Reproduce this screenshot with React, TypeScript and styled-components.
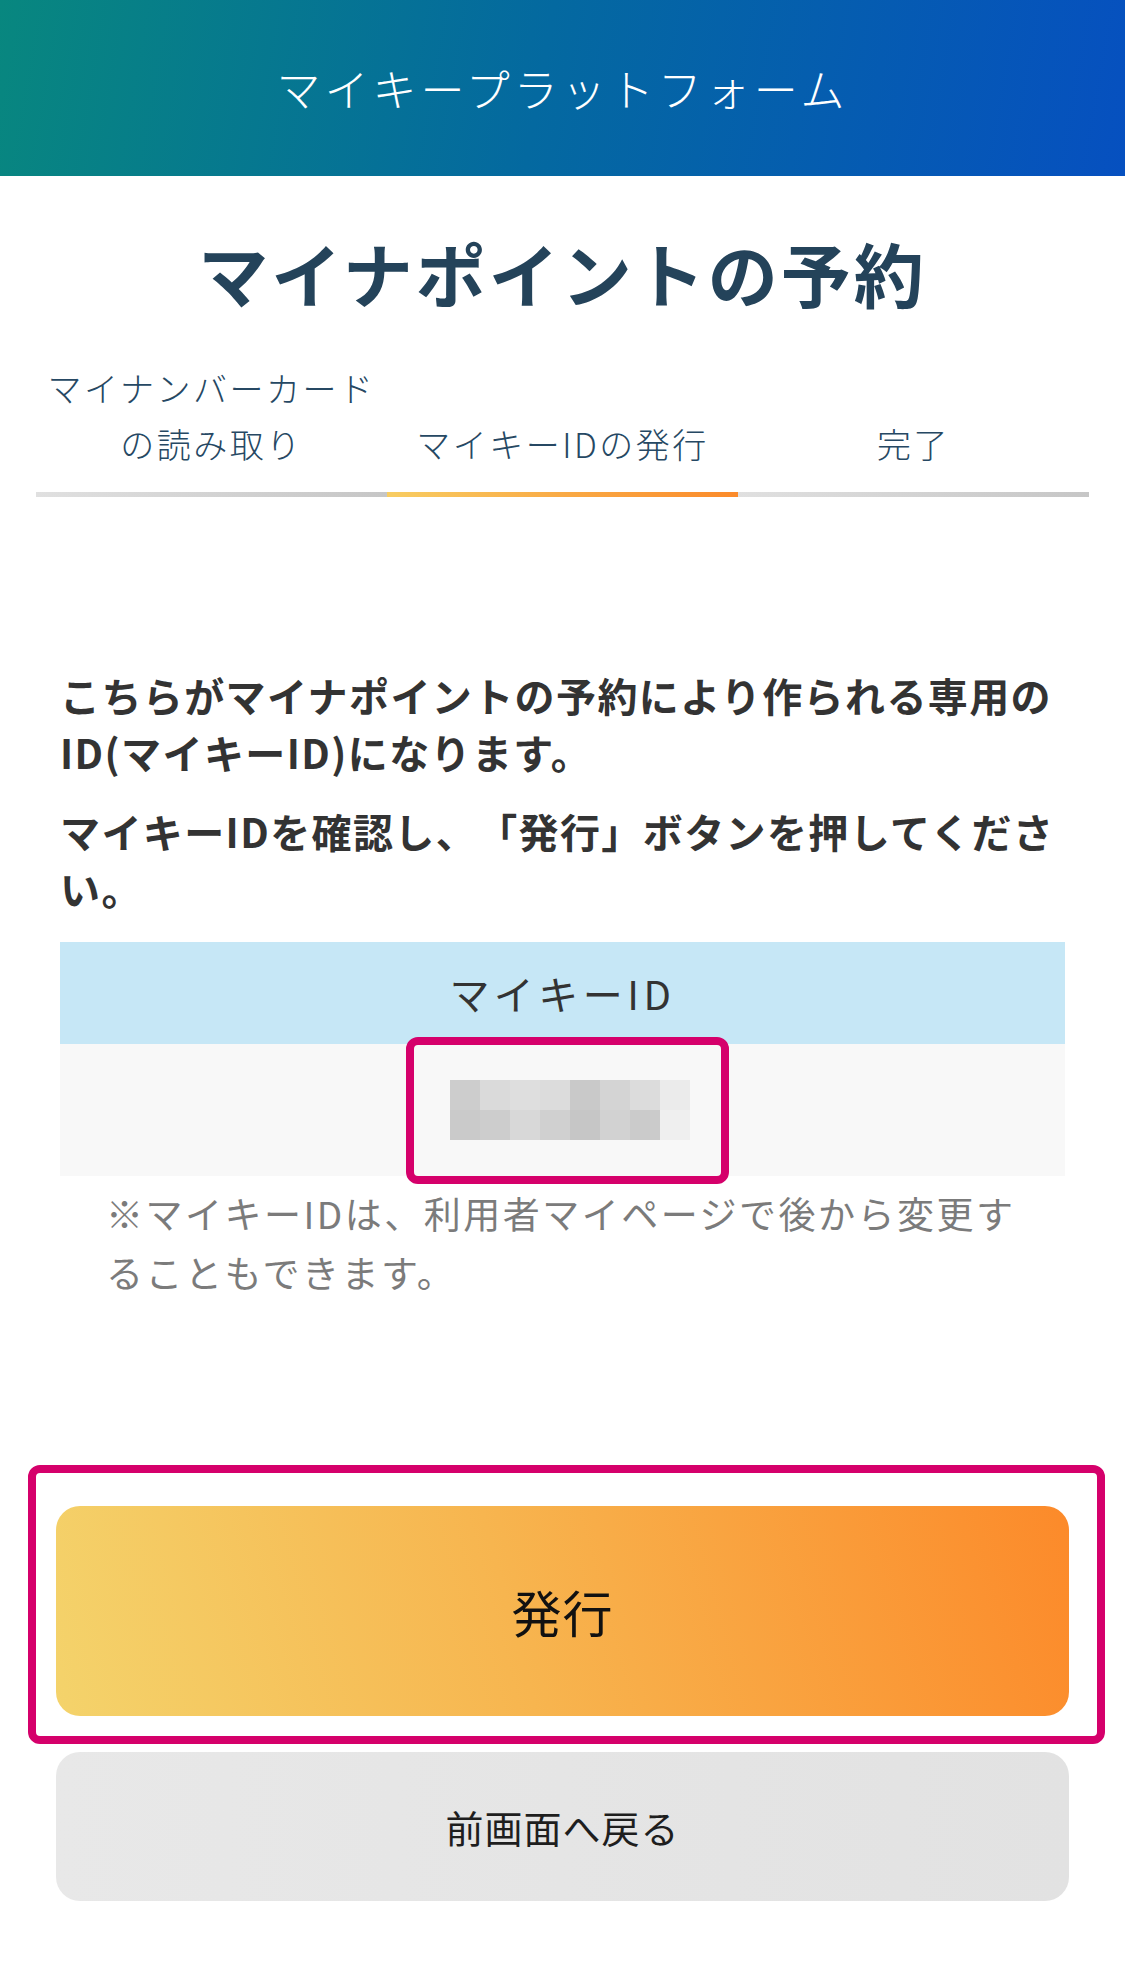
import React from "react";
import styled, { createGlobalStyle } from "styled-components";

const GlobalStyle = createGlobalStyle`
  html, body {
    margin: 0;
    padding: 0;
    background: #ffffff;
  }
  body {
    font-family: "Noto Sans CJK JP", "Noto Sans", "Liberation Sans", sans-serif;
    color: #333333;
    -webkit-font-smoothing: antialiased;
    text-spacing-trim: space-all;
  }
  * {
    box-sizing: border-box;
  }
`;

const Page = styled.div`
  width: 1125px;
  min-height: 1962px;
  display: flex;
  flex-direction: column;
  background: #ffffff;
`;

const Header = styled.header`
  height: 176px;
  display: flex;
  align-items: center;
  justify-content: center;
  background: linear-gradient(100deg, #08877f 0%, #0469a0 48%, #0650c0 100%);
`;

const HeaderTitle = styled.h1`
  margin: 0;
  color: #ffffff;
  font-size: 44px;
  font-weight: 300;
  letter-spacing: 4px;
  line-height: 1;
`;

const PageTitle = styled.h2`
  margin: 48px 0 0;
  text-align: center;
  color: #24435a;
  font-size: 70px;
  font-weight: 700;
  line-height: 98px;
  letter-spacing: 3px;
`;

const Steps = styled.ol`
  list-style: none;
  margin: 38px 0 0;
  padding: 0 36px;
  display: grid;
  grid-template-columns: repeat(3, 1fr);
`;

const Step = styled.li`
  display: flex;
  flex-direction: column;
`;

const StepLabel = styled.span`
  min-height: 112px;
  display: flex;
  align-items: flex-end;
  justify-content: center;
  text-align: center;
  color: #264863;
  font-size: 34px;
  font-weight: 300;
  line-height: 56px;
  letter-spacing: 2.5px;
`;

const StepBar = styled.span<{ $active: boolean }>`
  margin-top: 20px;
  height: 5px;
  background: ${(p) =>
    p.$active
      ? "linear-gradient(90deg, #f8cd62 0%, #f9aa45 50%, #fb8a2a 100%)"
      : "linear-gradient(90deg, #e0e0e0 0%, #c6c6c6 100%)"};
`;

const Content = styled.section`
  margin-top: 170px;
  padding: 0 60px;
  display: flex;
  flex-direction: column;
`;

const Lead = styled.p<{ $gap?: number }>`
  margin: ${(p) => p.$gap ?? 0}px 0 0;
  color: #333333;
  font-size: 40px;
  font-weight: 700;
  line-height: 57px;
  letter-spacing: 1.4px;
`;

const IdTable = styled.div`
  margin-top: 25px;
  display: flex;
  flex-direction: column;
`;

const IdHead = styled.div`
  height: 102px;
  display: flex;
  align-items: center;
  justify-content: center;
  background: #c6e7f6;
  color: #333333;
  font-size: 40px;
  font-weight: 400;
  letter-spacing: 4.5px;
`;

const IdBody = styled.div`
  height: 132px;
  display: flex;
  align-items: center;
  justify-content: center;
  background: #f8f8f8;
`;

const MosaicWrap = styled.div`
  position: relative;
  width: 240px;
  height: 60px;
  margin-left: 15px;
`;

const Highlight = styled.div<{ $t: number; $r: number; $b: number; $l: number }>`
  position: absolute;
  top: ${(p) => -p.$t}px;
  right: ${(p) => -p.$r}px;
  bottom: ${(p) => -p.$b}px;
  left: ${(p) => -p.$l}px;
  border: 8px solid #d5006b;
  border-radius: 12px;
  pointer-events: none;
`;

const Note = styled.p`
  margin: 8px 0 0;
  padding: 0 46px;
  color: #7b7b7b;
  font-size: 37px;
  font-weight: 400;
  line-height: 59px;
  letter-spacing: 2.5px;
`;

const Actions = styled.div`
  margin-top: 204px;
  padding: 0 56px;
  display: flex;
  flex-direction: column;
  gap: 36px;
`;

const PrimaryWrap = styled.div`
  position: relative;
`;

const PrimaryButton = styled.button`
  width: 100%;
  height: 210px;
  border: none;
  border-radius: 24px;
  background: linear-gradient(75deg, #f4d36b 0%, #f7b54f 45%, #fc8a2a 100%);
  color: #111111;
  font-family: inherit;
  font-size: 50px;
  font-weight: 400;
  letter-spacing: 1px;
  cursor: pointer;
`;

const SecondaryButton = styled.button`
  width: 100%;
  height: 149px;
  border: none;
  border-radius: 24px;
  background: linear-gradient(90deg, #e8e8e8 0%, #e2e2e2 100%);
  color: #1e1e1e;
  font-family: inherit;
  font-size: 38px;
  font-weight: 400;
  letter-spacing: 1px;
  cursor: pointer;
`;

const mosaic = [
  ["#cdcdcd", "#dadada", "#dedede", "#dcdcdc", "#c9c9c9", "#d4d4d4", "#dcdcdc", "#ebebeb"],
  ["#cacaca", "#cdcdcd", "#d8d8d8", "#d0d0d0", "#c6c6c6", "#d2d2d2", "#cbcbcb", "#efefef"],
];

const MaskedId = () => (
  <svg width="240" height="60" viewBox="0 0 240 60" aria-hidden="true">
    {mosaic.map((row, y) =>
      row.map((fill, x) => (
        <rect key={`${x}-${y}`} x={x * 30} y={y * 30} width="30" height="30" fill={fill} />
      ))
    )}
  </svg>
);

const steps = [
  { label: "マイナンバーカードの読み取り", active: false },
  { label: "マイキーIDの発行", active: true },
  { label: "完了", active: false },
];

export default function App() {
  return (
    <>
      <GlobalStyle />
      <Page>
        <Header>
          <HeaderTitle>マイキープラットフォーム</HeaderTitle>
        </Header>

        <PageTitle>マイナポイントの予約</PageTitle>

        <Steps>
          {steps.map((s) => (
            <Step key={s.label}>
              <StepLabel>{s.label}</StepLabel>
              <StepBar $active={s.active} />
            </Step>
          ))}
        </Steps>

        <Content>
          <Lead>こちらがマイナポイントの予約により作られる専用のID(マイキーID)になります。</Lead>
          <Lead $gap={22}>マイキーIDを確認し、「発行」ボタンを押してください。</Lead>

          <IdTable>
            <IdHead>マイキーID</IdHead>
            <IdBody>
              <MosaicWrap>
                <MaskedId />
                <Highlight $t={43} $r={39} $b={44} $l={44} />
              </MosaicWrap>
            </IdBody>
          </IdTable>

          <Note>※マイキーIDは、利用者マイページで後から変更することもできます。</Note>
        </Content>

        <Actions>
          <PrimaryWrap>
            <PrimaryButton>発行</PrimaryButton>
            <Highlight $t={41} $r={36} $b={28} $l={28} />
          </PrimaryWrap>
          <SecondaryButton>前画面へ戻る</SecondaryButton>
        </Actions>
      </Page>
    </>
  );
}
